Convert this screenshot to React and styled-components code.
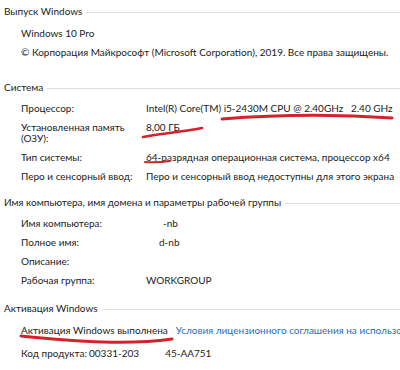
import React from "react";
import styled, { createGlobalStyle } from "styled-components";

const Global = createGlobalStyle`
  html, body { margin: 0; padding: 0; background: #fff; }
  body { width: 400px; height: 370px; overflow: hidden; }
`;

const Page = styled.div`
  position: relative;
  width: 400px;
  height: 370px;
  overflow: hidden;
  padding-top: 1px;
  box-sizing: border-box;
  font-family: "Lato", "Segoe UI", sans-serif;
  font-size: 10px;
  color: #1b1b1b;
`;

const Section = styled.section`
  margin-top: ${(p) => p.$gap || 0}px;
`;

const Header = styled.div`
  display: flex;
  align-items: center;
  height: 22px;
  padding-left: 4px;
  padding-bottom: 2px;
  box-sizing: border-box;
  white-space: nowrap;
  &::after {
    content: "";
    flex: 1;
    height: 1px;
    background: #dedede;
    margin-left: 4px;
    margin-top: 3px;
  }
`;

const Row = styled.div`
  display: grid;
  grid-template-columns: ${(p) => p.$label || 125}px 1fr;
  align-items: ${(p) => (p.$multi ? "start" : "center")};
  min-height: 19px;
  padding-left: 21px;
  padding-top: ${(p) => p.$pt || 0}px;
  padding-bottom: ${(p) => p.$pb || 0}px;
  margin-top: ${(p) => p.$mt || 0}px;
  box-sizing: border-box;
  white-space: nowrap;
`;

const Plain = styled.div`
  display: flex;
  align-items: center;
  height: 19px;
  padding-left: 21px;
  white-space: nowrap;
`;

const Label = styled.div`
  line-height: ${(p) => (p.$multi ? "11px" : "19px")};
  white-space: ${(p) => (p.$multi ? "normal" : "nowrap")};
  width: ${(p) => (p.$multi ? "118px" : "auto")};
`;

const Value = styled.div`
  line-height: ${(p) => (p.$multi ? "11px" : "19px")};
  padding-left: ${(p) => p.$indent || 0}px;
  white-space: nowrap;
`;

const Link = styled.span`
  color: #1f6fc1;
  margin-left: 8px;
`;

const Gap = styled.span`
  display: inline-block;
  width: ${(p) => p.$w}px;
`;

const Marks = styled.svg`
  position: absolute;
  left: 0;
  top: 0;
  pointer-events: none;
`;

export default function App() {
  return (
    <>
      <Global />
      <Page>
        <Section>
          <Header>Выпуск Windows</Header>
          <Plain>Windows 10 Pro</Plain>
          <Plain>© Корпорация Майкрософт (Microsoft Corporation), 2019. Все права защищены.</Plain>
        </Section>

        <Section $gap={16}>
          <Header>Система</Header>
          <Row>
            <Label>Процессор:</Label>
            <Value>Intel(R) Core(TM) i5-2430M CPU @ 2.40GHz&nbsp;&nbsp; 2.40 GHz</Value>
          </Row>
          <Row $multi $pt={4} $pb={4}>
            <Label $multi>Установленная память (ОЗУ):</Label>
            <Value $multi>8,00 ГБ</Value>
          </Row>
          <Row>
            <Label>Тип системы:</Label>
            <Value>64-разрядная операционная система, процессор x64</Value>
          </Row>
          <Row>
            <Label>Перо и сенсорный ввод:</Label>
            <Value>Перо и сенсорный ввод недоступны для этого экрана</Value>
          </Row>
        </Section>

        <Section $gap={6}>
          <Header>Имя компьютера, имя домена и параметры рабочей группы</Header>
          <Row>
            <Label>Имя компьютера:</Label>
            <Value $indent={17}>-nb</Value>
          </Row>
          <Row>
            <Label>Полное имя:</Label>
            <Value $indent={13}>d-nb</Value>
          </Row>
          <Row>
            <Label>Описание:</Label>
            <Value></Value>
          </Row>
          <Row>
            <Label>Рабочая группа:</Label>
            <Value>WORKGROUP</Value>
          </Row>
        </Section>

        <Section $gap={8}>
          <Header>Активация Windows</Header>
          <Plain>
            Активация Windows выполнена
            <Link>Условия лицензионного соглашения на использование программного обеспечения корпорации Майкрософт</Link>
          </Plain>
          <Row $label={68} $mt={5}>
            <Label>Код продукта:</Label>
            <Value>
              00331-203
              <Gap $w={26} />
              45-AA751
            </Value>
          </Row>
        </Section>

        <Marks width="400" height="370" viewBox="0 0 400 370">
          <g fill="none" stroke="#d8202a" strokeLinecap="round">
            <path d="M222 119 C 260 116, 320 113, 392 118" strokeWidth="3" />
            <path d="M143 137 C 160 134, 180 132, 202 128" strokeWidth="2.5" />
            <path d="M145 162 C 155 163, 163 162, 170 161" strokeWidth="2" />
            <path d="M21 336 C 80 342, 130 345, 172 339" strokeWidth="3" />
          </g>
        </Marks>
      </Page>
    </>
  );
}
